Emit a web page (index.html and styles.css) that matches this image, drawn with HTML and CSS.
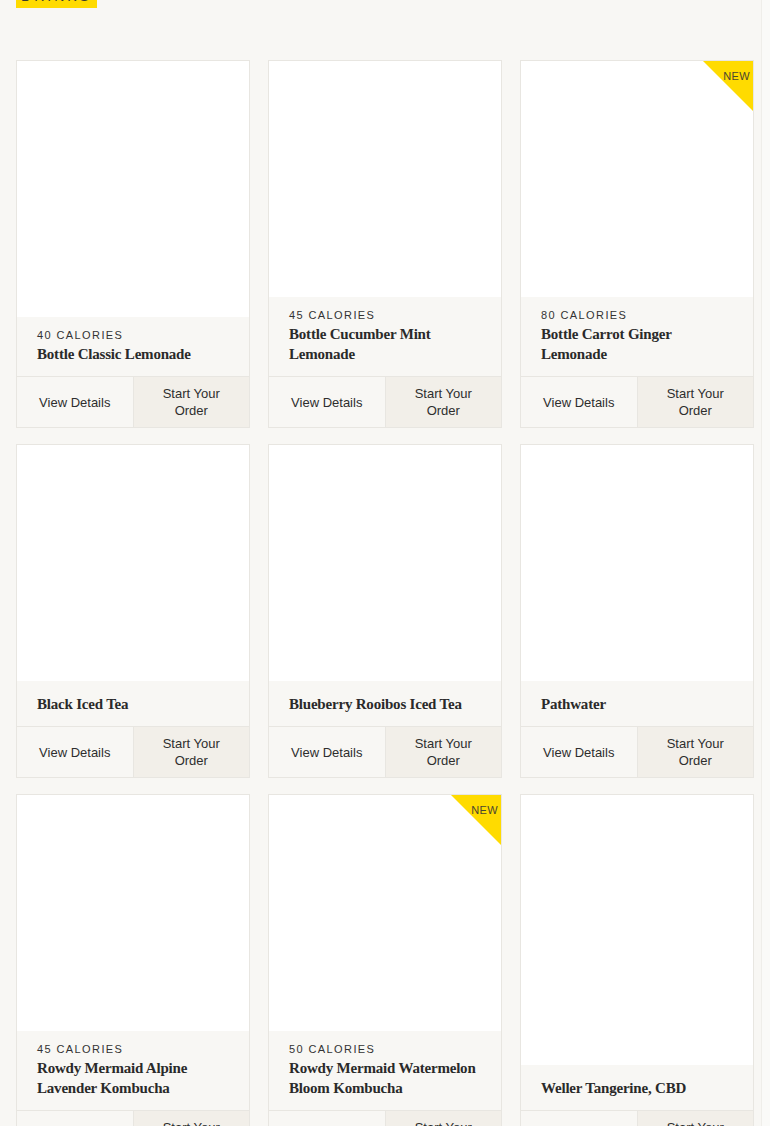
FILE: index.html
```html
<!DOCTYPE html>
<html lang="en">
<head>
<meta charset="utf-8">
<title>Drinks</title>
<link rel="stylesheet" href="styles.css">
</head>
<body>
<div class="page">
  <h2 class="tag">DRINKS</h2>
  <div class="grid">
    <div class="card">
      <div class="img"></div>
      <div class="info"><div class="cal">40 CALORIES</div><div class="name">Bottle Classic Lemonade</div></div>
      <div class="actions"><a class="btn view">View Details</a><a class="btn order">Start Your Order</a></div>
    </div>
    <div class="card">
      <div class="img"></div>
      <div class="info"><div class="cal">45 CALORIES</div><div class="name">Bottle Cucumber Mint Lemonade</div></div>
      <div class="actions"><a class="btn view">View Details</a><a class="btn order">Start Your Order</a></div>
    </div>
    <div class="card">
      <div class="img"></div>
      <div class="badge"><span>NEW</span></div>
      <div class="info"><div class="cal">80 CALORIES</div><div class="name">Bottle Carrot Ginger Lemonade</div></div>
      <div class="actions"><a class="btn view">View Details</a><a class="btn order">Start Your Order</a></div>
    </div>
    <div class="card">
      <div class="img"></div>
      <div class="info"><div class="name">Black Iced Tea</div></div>
      <div class="actions"><a class="btn view">View Details</a><a class="btn order">Start Your Order</a></div>
    </div>
    <div class="card">
      <div class="img"></div>
      <div class="info"><div class="name">Blueberry Rooibos Iced Tea</div></div>
      <div class="actions"><a class="btn view">View Details</a><a class="btn order">Start Your Order</a></div>
    </div>
    <div class="card">
      <div class="img"></div>
      <div class="info"><div class="name">Pathwater</div></div>
      <div class="actions"><a class="btn view">View Details</a><a class="btn order">Start Your Order</a></div>
    </div>
    <div class="card">
      <div class="img"></div>
      <div class="info"><div class="cal">45 CALORIES</div><div class="name">Rowdy Mermaid Alpine Lavender Kombucha</div></div>
      <div class="actions"><a class="btn view">View Details</a><a class="btn order">Start Your Order</a></div>
    </div>
    <div class="card">
      <div class="img"></div>
      <div class="badge"><span>NEW</span></div>
      <div class="info"><div class="cal">50 CALORIES</div><div class="name">Rowdy Mermaid Watermelon Bloom Kombucha</div></div>
      <div class="actions"><a class="btn view">View Details</a><a class="btn order">Start Your Order</a></div>
    </div>
    <div class="card">
      <div class="img"></div>
      <div class="info"><div class="name">Weller Tangerine, CBD</div></div>
      <div class="actions"><a class="btn view">View Details</a><a class="btn order">Start Your Order</a></div>
    </div>
  </div>
</div>
</body>
</html>
```
FILE: styles.css
```css
* { box-sizing: border-box; }
html, body { margin: 0; padding: 0; }
body {
  background: #fafaf8;
  font-family: "Liberation Sans", Arial, sans-serif;
  color: #2b2b2b;
}
.page {
  display: flow-root;
  width: 762px;
  min-height: 1126px;
  background: #f8f7f4;
  border-right: 1px solid #efeeea;
  padding: 0 7px 40px 16px;
}
.tag {
  display: block;
  margin: -16px 0 52px 0;
  height: 24px;
  width: 81px;
  padding: 4px 0 0 0;
  text-align: center;
  background: #ffdb00;
  font-size: 14px;
  line-height: 16px;
  font-weight: normal;
  letter-spacing: 3px;
  color: #3a3a2a;
}
.grid {
  display: grid;
  grid-template-columns: repeat(3, 234px);
  column-gap: 18px;
  row-gap: 16px;
}
.card {
  position: relative;
  display: flex;
  flex-direction: column;
  border: 1px solid #e8e6e1;
  background: #f8f7f4;
}
.img {
  flex: 1 0 236px;
  background: #ffffff;
}
.info {
  padding: 13px 20px 12px 20px;
  background: #f8f7f4;
}
.cal {
  font-size: 11px;
  line-height: 10px;
  letter-spacing: 1.4px;
  color: #333333;
  margin-bottom: 4px;
}
.name {
  font-family: "Liberation Serif", "Times New Roman", serif;
  font-weight: bold;
  font-size: 15px;
  line-height: 20px;
  letter-spacing: -0.2px;
  color: #2a2a2a;
}
.actions {
  display: flex;
  border-top: 1px solid #e8e6e1;
  height: 51px;
}
.btn {
  flex: 1 1 0;
  display: flex;
  align-items: center;
  justify-content: center;
  text-align: center;
  padding: 0 22px;
  font-size: 13px;
  line-height: 17px;
  color: #2e2e2e;
  cursor: pointer;
}
.view { background: #f8f7f4; }
.order {
  background: #f2efe9;
  border-left: 1px solid #e8e6e1;
}
.badge {
  position: absolute;
  top: 0;
  right: 0;
  width: 50px;
  height: 50px;
  background: #ffdb00;
  clip-path: polygon(0 0, 100% 0, 100% 100%);
}
.badge span {
  position: absolute;
  top: 9px;
  right: 3px;
  font-size: 11px;
  line-height: 13px;
  letter-spacing: 0.4px;
  color: #4a4630;
}
```
